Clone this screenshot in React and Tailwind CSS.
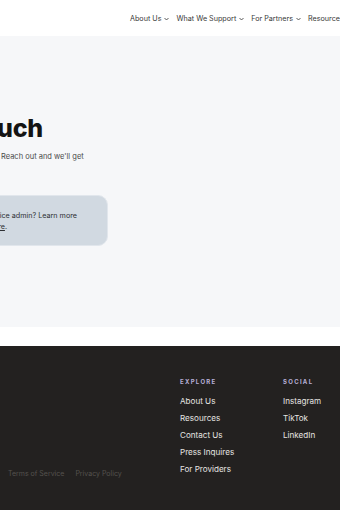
export default function App() {
  const nav = ["About Us", "What We Support", "For Partners", "Resources"];
  const explore = ["About Us", "Resources", "Contact Us", "Press Inquires", "For Providers"];
  const social = ["Instagram", "TikTok", "LinkedIn"];

  return (
    <div className="w-[340px] h-[510px] overflow-hidden bg-white font-['Inter',sans-serif]">
      {/* header */}
      <div className="h-[36px] flex items-center pt-[2px] pl-[130px] whitespace-nowrap overflow-hidden">
        {nav.map((n, i) => (
          <div key={i} className="flex items-center shrink-0 mr-[7px] text-[7.2px] text-[#383838]">
            <span>{n}</span>
            {i < 3 && (
              <svg className="ml-[3px]" width="5" height="4" viewBox="0 0 10 6" fill="none">
                <path d="M1 1l4 4 4-4" stroke="#333" strokeWidth="1.6" />
              </svg>
            )}
          </div>
        ))}
      </div>

      {/* contact hero */}
      <div className="h-[291px] bg-[#f6f7f9] pt-[77px]">
        <div className="flex justify-end w-[43px]">
          <h1 className="shrink-0 whitespace-nowrap text-[25px] leading-[30px] font-extrabold text-[#141414] tracking-[-0.2px]">
            Get in Touch
          </h1>
        </div>
        <p className="mt-[8px] pl-[1px] whitespace-nowrap text-[7.5px] leading-[11px] text-[#4a4a4a]">
          Reach out and we'll get
        </p>
        <div className="flex justify-end w-[108px] mt-[33px]">
          <div className="shrink-0 w-[220px] h-[51px] rounded-[10px] bg-[#d1d9e1] border border-[#e1e6ec] flex flex-col justify-center items-end pr-[30px] text-[7.2px] leading-[11px] text-[#2d2f33] whitespace-nowrap">
            <span>Are you an office admin? Learn more</span>
            <span className="mr-[70px]">
              about it <span className="underline">here</span>.
            </span>
          </div>
        </div>
      </div>

      <div className="h-[19px] bg-white" />

      {/* footer */}
      <div className="h-[164px] bg-[#232120]">
        <div className="flex pt-[32px]">
          <div className="w-[180px]">
            <div className="flex gap-[11px] pl-[8px] mt-[91px] text-[7px] leading-[10px] text-[#55524e] whitespace-nowrap">
              <span>Terms of Service</span>
              <span>Privacy Policy</span>
            </div>
          </div>
          <div className="w-[103px]">
            <div className="text-[6px] font-bold tracking-[1.3px] text-[#b7afd6] leading-[8px]">EXPLORE</div>
            <div className="mt-[7px] flex flex-col">
              {explore.map((e, i) => (
                <span key={i} className="text-[8.1px] leading-[17px] text-[#e6e4e1]">{e}</span>
              ))}
            </div>
          </div>
          <div>
            <div className="text-[6px] font-bold tracking-[1.3px] text-[#b7afd6] leading-[8px]">SOCIAL</div>
            <div className="mt-[7px] flex flex-col">
              {social.map((e, i) => (
                <span key={i} className="text-[8.1px] leading-[17px] text-[#e6e4e1]">{e}</span>
              ))}
            </div>
          </div>
        </div>
      </div>
    </div>
  );
}
